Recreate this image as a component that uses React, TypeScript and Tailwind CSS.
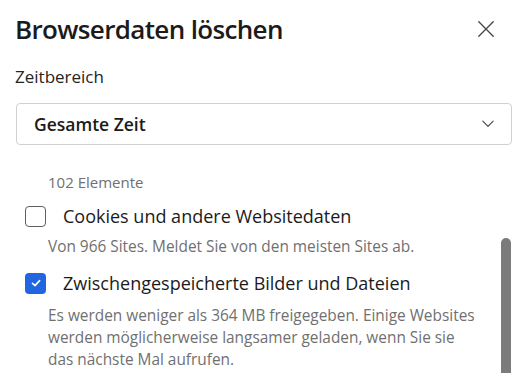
import { useState } from "react";

const font = "font-['Segoe_UI','Open_Sans','Noto_Sans',sans-serif]";

function Check({ checked, onToggle }: { checked: boolean; onToggle: () => void }) {
  return (
    <button
      type="button"
      role="checkbox"
      aria-checked={checked}
      onClick={onToggle}
      className={
        checked
          ? "flex h-[21px] w-[21px] shrink-0 items-center justify-center rounded-[4px] bg-[#1f66e0]"
          : "flex h-[21px] w-[21px] shrink-0 items-center justify-center rounded-[4px] border border-[#5f5f5f] bg-white"
      }
    >
      {checked && (
        <svg width="12" height="12" viewBox="0 0 12 12" fill="none">
          <path d="M2.5 6.3 L5 8.6 L9.6 3.6" stroke="white" strokeWidth="1.6" strokeLinecap="round" strokeLinejoin="round" />
        </svg>
      )}
    </button>
  );
}

export default function App() {
  const [cookies, setCookies] = useState(false);
  const [cache, setCache] = useState(true);

  return (
    <div className={`relative h-[373px] w-[515px] overflow-hidden bg-white text-[#1b1b1b] ${font}`}>
      <header className="flex h-[58px] items-center justify-between pl-[15px] pr-[17px]">
        <h1 className="text-[26px] font-semibold leading-[32px] tracking-[-0.65px]">Browserdaten löschen</h1>
        <button type="button" aria-label="Schließen" className="flex h-[24px] w-[24px] items-center justify-center">
          <svg width="16" height="16" viewBox="0 0 16 16" fill="none">
            <path d="M0.8 0.8 L15.2 15.2 M15.2 0.8 L0.8 15.2" stroke="#444" strokeWidth="1.3" strokeLinecap="round" />
          </svg>
        </button>
      </header>

      <div className="pl-[15px] text-[17px] leading-[38px] text-[#242424]">Zeitbereich</div>

      <div className="ml-[16px] mt-[7px] flex h-[42px] w-[496px] items-center justify-between rounded-[4px] border border-[#d1d1d1] pl-[17px] pr-[17px]">
        <span className="text-[17.5px] font-semibold text-[#1b1b1b]">Gesamte Zeit</span>
        <svg width="12" height="8" viewBox="0 0 12 8" fill="none">
          <path d="M0.8 1.2 L6 6.4 L11.2 1.2" stroke="#444" strokeWidth="1.1" strokeLinecap="round" strokeLinejoin="round" />
        </svg>
      </div>

      <div className="mt-[26px] pl-[48px] text-[15px] leading-[22px] text-[#707070]">102 Elemente</div>

      <div className="mt-[6px] flex h-[34px] items-center gap-[17px] pl-[25px]">
        <Check checked={cookies} onToggle={() => setCookies(!cookies)} />
        <span className="text-[18px] text-[#1b1b1b]">Cookies und andere Websitedaten</span>
      </div>
      <div className="flex h-[28px] items-center pl-[48px] text-[15.4px] text-[#707070]">
        Von 966 Sites. Meldet Sie von den meisten Sites ab.
      </div>

      <div className="flex h-[44px] items-center gap-[17px] pl-[25px]">
        <Check checked={cache} onToggle={() => setCache(!cache)} />
        <span className="text-[18px] text-[#1b1b1b]">Zwischengespeicherte Bilder und Dateien</span>
      </div>
      <p className="pl-[48px] text-[15.4px] leading-[22px] text-[#707070]">
        <span className="block whitespace-nowrap">Es werden weniger als 364 MB freigegeben. Einige Websites</span>
        <span className="block whitespace-nowrap">werden möglicherweise langsamer geladen, wenn Sie sie</span>
        <span className="block whitespace-nowrap">das nächste Mal aufrufen.</span>
      </p>

      <div className="absolute bottom-0 right-[4px] top-[238px] w-[10px] rounded-t-full bg-[#7b7b7b]" />
    </div>
  );
}
